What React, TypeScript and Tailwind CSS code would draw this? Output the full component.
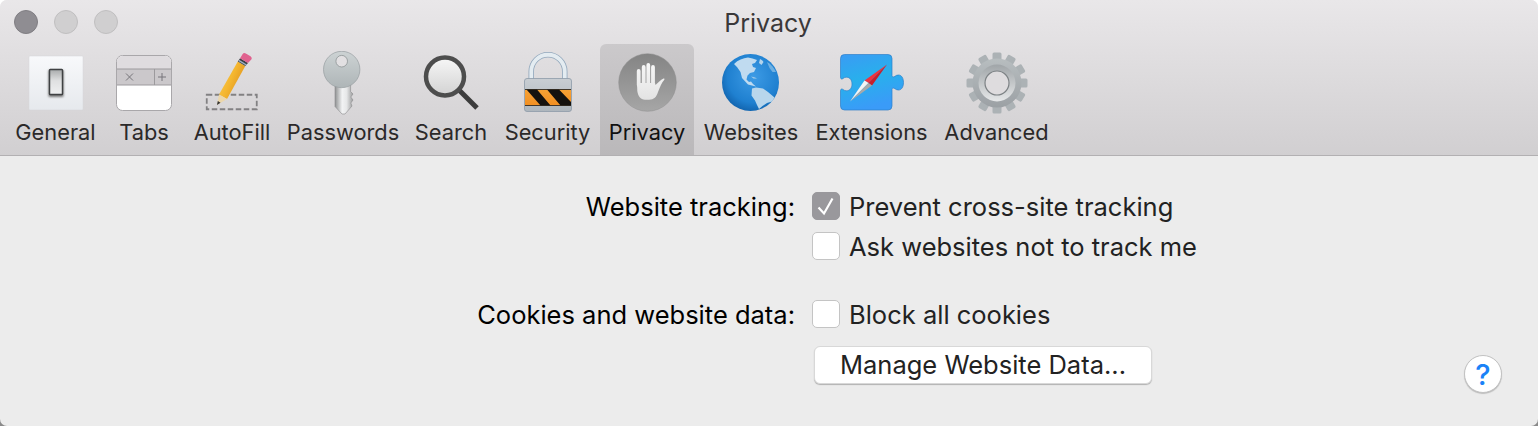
import React from "react";

const Gen = () => (
  <svg width="56" height="56" viewBox="0 0 56 56">
    <defs>
      <linearGradient id="gs" x1="0" y1="0" x2="0" y2="1"><stop offset="0" stopColor="#f8f9fb" /><stop offset="1" stopColor="#e6e9ed" /></linearGradient>
      <linearGradient id="gk" x1="0" y1="0" x2="0" y2="1"><stop offset="0" stopColor="#a9abac" /><stop offset="0.45" stopColor="#dfe0e1" /><stop offset="1" stopColor="#eff0f1" /></linearGradient>
      <filter id="gb" x="-40%" y="-40%" width="180%" height="180%"><feGaussianBlur stdDeviation="1.2" /></filter>
    </defs>
    <rect x="1" y="1" width="54" height="54" rx="1" fill="url(#gs)" stroke="#d5d6d8" strokeWidth="0.5" />
    <rect x="20.500" y="15" width="15" height="27" rx="1" fill="#777" filter="url(#gb)" />
    <rect x="21.500" y="14.500" width="13" height="25" rx="0.800" fill="url(#gk)" stroke="#3f4143" strokeWidth="1.500" />
  </svg>
);

const Tabs = () => (
  <svg width="58" height="58" viewBox="0 0 58 58">
    <rect x="1.500" y="1.500" width="55" height="55" rx="6" fill="#fff" stroke="#a9a7aa" strokeWidth="1" />
    <path d="M2 15V7.500A5.500 5.500 0 0 1 7.500 2h43A5.500 5.500 0 0 1 56 7.500V15Z" fill="#dfdcdf" />
    <rect x="2" y="15" width="54" height="16" fill="#cbc8cb" />
    <path d="M2 15H56M2 31H56M39.500 15V31" stroke="#9c9a9d" strokeWidth="1" />
    <path d="M11 19.500l7 7M18 19.500l-7 7M43 23h8M47 19v8" stroke="#77757a" strokeWidth="1" fill="none" />
  </svg>
);

const Pencil = () => (
  <svg width="56" height="60" viewBox="0 0 56 60">
    <defs>
      <linearGradient id="pb" x1="0" y1="0" x2="1" y2="0.600"><stop offset="0" stopColor="#fbd15a" /><stop offset="0.550" stopColor="#f4b62f" /><stop offset="1" stopColor="#dc8f1c" /></linearGradient>
    </defs>
    <rect x="2.750" y="41.750" width="50" height="14.500" fill="none" stroke="#828183" strokeWidth="1.800" strokeDasharray="5.500 2.500" />
    <path d="M15 41.500 33.800 8.400 41.300 13 23 46Z" fill="url(#pb)" />
    <path d="M15 41.500 23 46 13 52Z" fill="#ecd7ab" />
    <path d="M13 52l.8-4 2.700 1.700Z" fill="#333" />
    <path d="M33.800 8.400 36.100 5.200 44 10 41.300 13Z" fill="#3f4048" />
    <path d="M35 6.800 42.800 11.600 42 12.600 34.400 8Z" fill="#9fb4c8" />
    <path d="M36.100 5.200 38.500 1.300a2.500 2.500 0 0 1 3.300-.9L46.500 3.300a2.500 2.500 0 0 1 .8 3.300L44 10Z" fill="#e0628f" />
  </svg>
);

const Key = () => (
  <svg width="40" height="64" viewBox="0 0 40 64">
    <defs>
      <linearGradient id="kh" x1="0" y1="0" x2="0" y2="1"><stop offset="0" stopColor="#cdd3d4" /><stop offset="1" stopColor="#aeb5b7" /></linearGradient>
      <linearGradient id="ks" x1="0" y1="0" x2="1" y2="0"><stop offset="0" stopColor="#8f9192" /><stop offset="0.400" stopColor="#f2f3f4" /><stop offset="0.650" stopColor="#e6e7e8" /><stop offset="1" stopColor="#9a9b9c" /></linearGradient>
    </defs>
    <path d="M12 30H27.600V40.500L30 43 27.800 46 30 49 27.800 52 29 55 22 63H19L12 55.500Z" fill="url(#ks)" stroke="#8b8c8d" strokeWidth="0.600" />
    <circle cx="18.700" cy="18.500" r="18.200" fill="url(#kh)" stroke="#979da0" strokeWidth="0.700" />
    <circle cx="18.700" cy="10.200" r="5.800" fill="#e2e0e2" stroke="#8e9496" strokeWidth="0.800" />
  </svg>
);

const Search = () => (
  <svg width="58" height="58" viewBox="0 0 58 58">
    <defs>
      <linearGradient id="sg" x1="0" y1="0" x2="0" y2="1"><stop offset="0" stopColor="#f7f7f7" /><stop offset="1" stopColor="#d2d2d2" /></linearGradient>
    </defs>
    <path d="M36 35 L55 54" stroke="#3c3c3c" strokeWidth="5" fill="none" />
    <circle cx="23" cy="22.500" r="19" fill="url(#sg)" stroke="#4d4d4d" strokeWidth="4.500" />
  </svg>
);

const Lock = () => (
  <svg width="50" height="62" viewBox="0 0 50 62">
    <defs>
      <linearGradient id="lb" x1="0" y1="0" x2="0" y2="1"><stop offset="0" stopColor="#c9ced3" /><stop offset="1" stopColor="#aeb6bd" /></linearGradient>
      <linearGradient id="lo" x1="0" y1="0" x2="0" y2="1"><stop offset="0" stopColor="#f7a235" /><stop offset="1" stopColor="#f18f22" /></linearGradient>
    </defs>
    <path d="M8.250 28V19.500a16.750 16.750 0 0 1 33.500 0V28" fill="none" stroke="#93a8bc" strokeWidth="5.500" />
    <path d="M8.250 28V19.500a16.750 16.750 0 0 1 33.500 0V28" fill="none" stroke="#e4ecf1" strokeWidth="3.800" />
    <rect x="1.500" y="26.500" width="47" height="33" rx="2.500" fill="url(#lb)" stroke="#8d9aa8" strokeWidth="0.800" />
    <rect x="2" y="37.500" width="46" height="16" fill="url(#lo)" />
    <path d="M3.500 37.500H14L27.500 53.500H17.500ZM24 37.500H36L48 50V53.500H37.500Z" fill="#15120f" />
    <path d="M2 37.500H48M2 53.500H48" stroke="#1d1a17" strokeWidth="0.800" />
  </svg>
);

const Hand = () => (
  <svg width="60" height="60" viewBox="0 0 60 60">
    <defs>
      <linearGradient id="hg" x1="0" y1="0" x2="0" y2="1"><stop offset="0" stopColor="#848484" /><stop offset="1" stopColor="#a6a6a6" /></linearGradient>
      <linearGradient id="hw" gradientUnits="userSpaceOnUse" x1="0" y1="10" x2="0" y2="47"><stop offset="0" stopColor="#f7f7f7" /><stop offset="1" stopColor="#e3e3e3" /></linearGradient>
    </defs>
    <circle cx="30.500" cy="29.500" r="28.800" fill="url(#hg)" stroke="#8c8c8c" strokeWidth="0.500" />
    <path d="M21.700 18V32M26.700 14V30M31.300 12V30M36 14V32" stroke="url(#hw)" strokeWidth="3.800" strokeLinecap="round" fill="none" />
    <path d="M20 30H38L38.500 32C41 29.500 43.500 27 46.500 25.500 47.300 25.200 47.800 26 47.300 26.700 44.500 30 43 34 41 39 39.500 44 37 46.700 32 46.700H28C23.500 46.700 21 43 20.300 38Z" fill="url(#hw)" />
  </svg>
);

const Globe = () => (
  <svg width="58" height="58" viewBox="0 0 58 58">
    <defs>
      <radialGradient id="og" cx="0.550" cy="0.400" r="0.650"><stop offset="0" stopColor="#3d9be5" /><stop offset="0.700" stopColor="#1f80d0" /><stop offset="1" stopColor="#0f5fa8" /></radialGradient>
    </defs>
    <circle cx="28.500" cy="28.500" r="28.500" fill="url(#og)" />
    <path d="M12 10C16 6 21 4 26 3.500 29 4 32 5 35 6L33 9 30 10 31 13 34 14 32 18 28 19 25.500 21.500 24.500 25.500 27 28 29 27.500 31 30 34 32.500 30 31.500 26 30.500 20 24 18.500 18 15 13Z" fill="#c0dbf0" />
    <path d="M38 5C40 6 41 7 41.500 8L39.500 11 37 9Z" fill="#b4d4ec" />
    <path d="M29 22.500 33 23.500 35 24.500 31.500 24.500Z" fill="#a8cde8" />
    <path d="M30 34.500 34 33.500 41 34.500 46 38 52.500 43.500 50 47.500 45 49 40.500 52 37 55 35 51 33 46.500 29.500 41.500Z" fill="#b8d6ec" />
    <path d="M45 8C49 10 52 14 54 18L50.500 18 47.500 14Z" fill="#6fb0e2" />
  </svg>
);

const Puzzle = () => (
  <svg width="64" height="58" viewBox="0 0 64 58">
    <defs>
      <linearGradient id="pz" x1="0" y1="0" x2="0.300" y2="1"><stop offset="0" stopColor="#3a9bf4" /><stop offset="0.500" stopColor="#28b0ec" /><stop offset="1" stopColor="#3a9bf8" /></linearGradient>
    </defs>
    <path d="M4.500 .5H48a4 4 0 0 1 4 4V21.500c0 1.500 1.500 2 3 .8 1-.8 2-1.300 3.500-1.300 3 0 5 3 5 7.500s-2 7.500-5 7.500c-1.500 0-2.500-.5-3.500-1.300-1.500-1.200-3-.7-3 .8V52a4 4 0 0 1-4 4H4.500a4 4 0 0 1-4-4V36.500c0-1.500 1.500-2 2.500-1 1 .8 2 1.300 3.500 1.300 3.500 0 5.500-3 5.500-6.800s-2-6.800-5.500-6.800c-1.500 0-2.500.5-3.500 1.300-1 1-2.500.5-2.500-1V4.500a4 4 0 0 1 4-4Z" fill="url(#pz)" stroke="#2f7fc9" strokeWidth="0.700" />
    <path d="M47 10.500 24.500 26.500 28.500 29Z" fill="#f0323f" />
    <path d="M47 10.500 28.500 29 32 31.500Z" fill="#c81f2c" />
    <path d="M10 47.500 24.500 26.500 28.500 29Z" fill="#f4f4f4" />
    <path d="M10 47.500 28.500 29 32 31.500Z" fill="#a9a9a9" />
  </svg>
);

const Gear = () => {
  const teeth = Array.from({ length: 12 }, (_, i) => i * 30);
  return (
    <svg width="64" height="64" viewBox="0 0 64 64">
      <defs>
        <linearGradient id="gg" gradientUnits="userSpaceOnUse" x1="0" y1="0" x2="0" y2="64"><stop offset="0" stopColor="#bcc2c4" /><stop offset="1" stopColor="#979ca0" /></linearGradient>
        <linearGradient id="gr" x1="0" y1="0" x2="0" y2="1"><stop offset="0" stopColor="#a0a5a8" /><stop offset="1" stopColor="#e6e8e9" /></linearGradient>
      </defs>
      {teeth.map((a) => (
        <rect key={a} x="27.500" y="1.500" width="9" height="12" rx="1.500" fill="#acb2b5" transform={`rotate(${a} 32 32)`} />
      ))}
      <circle cx="32" cy="32" r="24.500" fill="url(#gg)" />
      <circle cx="32" cy="32" r="18.500" fill="url(#gr)" />
      <circle cx="32" cy="32" r="12" fill="#dedcde" stroke="#7d8285" strokeWidth="1.200" />
    </svg>
  );
};

const Item = ({ label, width, active, children }: { label: string; width: string; active?: boolean; children: React.ReactNode }) => (
  <div className={`flex flex-col items-center h-[111px] rounded-t-[6px] ${width} ${active ? "bg-gradient-to-b from-[#cbc9cb] to-[#bab8ba] text-[#111]" : "text-[#2b2929]"}`}>
    <div className="h-[72px] w-full flex items-center justify-center pt-[5px]">{children}</div>
    <div className="text-[21.800px] leading-[32px] whitespace-nowrap">{label}</div>
  </div>
);

const Check = ({ checked }: { checked?: boolean }) => (
  <div className={`w-[28px] h-[28px] shrink-0 rounded-[5px] flex items-center justify-center border ${checked ? "bg-[#99989c] border-[#99989c]" : "bg-white border-[#c4c4c4]"}`}>
    {checked && (
      <svg width="22" height="22" viewBox="0 0 22 22"><path d="M3.500 12.500l5.500 6L17.500 3.500" fill="none" stroke="#fff" strokeWidth="2.200" /></svg>
    )}
  </div>
);

const Row = ({ label, option, checked, className }: { label?: string; option: string; checked?: boolean; className: string }) => (
  <div className={`flex items-center h-[28px] ${className}`}>
    <div className="w-[795px] pt-[2px] text-right text-black whitespace-nowrap">{label}</div>
    <div className="ml-[17px]"><Check checked={checked} /></div>
    <div className="ml-[9px] pt-[2px] whitespace-nowrap text-[#222]">{option}</div>
  </div>
);

export default function App() {
  return (
    <div className="w-[1538px] h-[426px] bg-gradient-to-b from-white from-50% to-[#8a8a8a] to-50%">
      <div className="w-full h-full rounded-[7px] bg-[#ececec] overflow-hidden flex flex-col text-[25.500px]" style={{ fontFamily: "Inter, 'Liberation Sans', sans-serif" }}>
        <div className="h-[156px] shrink-0 bg-gradient-to-b from-[#e9e7e9] to-[#d1cfd1] border-b border-[#b2b0b2] flex flex-col">
          <div className="h-[44px] shrink-0 flex items-center relative">
            <div className="flex gap-[16px] pl-[14px]">
              <div className="w-[24px] h-[24px] rounded-full bg-[#8f8d92] border border-[#807e83]" />
              <div className="w-[24px] h-[24px] rounded-full bg-[#d0cfd0] border border-[#c0bfc0]" />
              <div className="w-[24px] h-[24px] rounded-full bg-[#d0cfd0] border border-[#c0bfc0]" />
            </div>
            <div className="absolute inset-x-0 top-[6px] pr-[2px] text-center text-[25px] leading-[34px] text-[#3a3839]">Privacy</div>
          </div>
          <div className="flex pl-[8px]">
            <Item label="General" width="w-[95px]"><Gen /></Item>
            <Item label="Tabs" width="w-[82px]"><Tabs /></Item>
            <Item label="AutoFill" width="w-[94px]"><Pencil /></Item>
            <Item label="Passwords" width="w-[128px]"><Key /></Item>
            <Item label="Search" width="w-[88px]"><Search /></Item>
            <Item label="Security" width="w-[105px]"><Lock /></Item>
            <Item label="Privacy" width="w-[94px]" active><Hand /></Item>
            <Item label="Websites" width="w-[114px]"><Globe /></Item>
            <Item label="Extensions" width="w-[127px]"><Puzzle /></Item>
            <Item label="Advanced" width="w-[123px]"><Gear /></Item>
          </div>
        </div>
        <div className="flex-1 flex flex-col">
          <Row className="mt-[36px]" label="Website tracking:" option="Prevent cross-site tracking" checked />
          <Row className="mt-[12px]" option="Ask websites not to track me" />
          <Row className="mt-[40px]" label="Cookies and website data:" option="Block all cookies" />
          <div className="flex items-start mt-[18px] pl-[814px] pr-[36px]">
            <button className="w-[338px] h-[38px] bg-white rounded-[6px] border border-[#d8d8d8] shadow-[0_1px_1px_rgba(0,0,0,0.25)] text-[#222] text-[25.500px] leading-none">Manage Website Data...</button>
            <div className="ml-auto mt-[9px] w-[38px] h-[38px] rounded-full bg-white border border-[#c2c2c2] shadow-[0_1px_1px_rgba(0,0,0,0.2)] flex items-center justify-center text-[#1a82f7] text-[29px] font-medium leading-none">?</div>
          </div>
        </div>
      </div>
    </div>
  );
}
